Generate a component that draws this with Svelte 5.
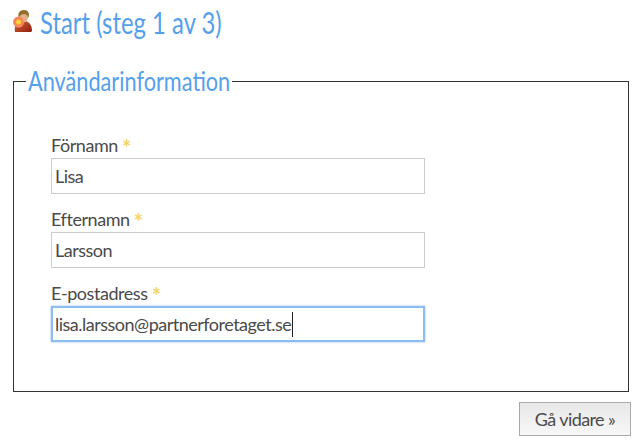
<script>
	let fields = [
		{ label: 'Förnamn', value: 'Lisa' },
		{ label: 'Efternamn', value: 'Larsson' },
		{ label: 'E-postadress', value: 'lisa.larsson@partnerforetaget.se', focused: true }
	];
</script>

<main>
	<h1>
		<svg class="icon" viewBox="0 0 19 22" width="19" height="22" aria-hidden="true">
			<defs>
				<linearGradient id="body" x1="0" y1="0" x2="1" y2="1">
					<stop offset="0" stop-color="#d9622f" />
					<stop offset="1" stop-color="#8f1f12" />
				</linearGradient>
				<radialGradient id="glow">
					<stop offset="0.35" stop-color="#fcd33a" />
					<stop offset="0.55" stop-color="#f7873d" />
					<stop offset="1" stop-color="#f6897d" />
				</radialGradient>
			</defs>
			<path d="M2 22c-1-6 1-10 7-11h3c5 1 7 5 7 10l-1 1z" fill="url(#body)" />
			<ellipse cx="10.5" cy="6.5" rx="4.6" ry="6" fill="#e0b184" />
			<path d="M6 8C4 3 7 0 11 0s6 3 4.500 8c-.5-2-2-4-4.500-4S7 5 6 8z" fill="#8f6d2b" />
			<circle cx="5.500" cy="12" r="5.500" fill="url(#glow)" />
		</svg>
		<span class="title">Start (steg 1 av 3)</span>
	</h1>

	<form>
		<fieldset>
			<legend><span>Användarinformation</span></legend>
			{#each fields as field}
				<div class="field">
					<label for={field.label}>{field.label} <span class="req">*</span></label>
					<div class="control">
						<input id={field.label} type="text" value={field.value} class:focused={field.focused} />
						{#if field.focused}<span class="caret"></span>{/if}
					</div>
				</div>
			{/each}
		</fieldset>
		<div class="actions">
			<button type="button">Gå vidare »</button>
		</div>
	</form>
</main>

<style>
	:global(body) {
		background: #fff;
	}
	main {
		padding: 0 9px 0 13px;
		font-family: Lato, sans-serif;
		color: #4a4a4a;
	}
	h1 {
		display: flex;
		align-items: center;
		gap: 8px;
		height: 44px;
		margin: 0 0 29px;
		font-size: 31px;
		font-weight: 400;
		color: #55a0ec;
		white-space: nowrap;
	}
	.icon {
		flex: none;
		margin-bottom: 2px;
	}
	.title {
		display: inline-block;
		transform: scaleX(0.77);
		transform-origin: left center;
	}
	fieldset {
		box-sizing: border-box;
		height: 326px;
		margin: -7px 2px 0 0;
		padding: 36px 16px 0 37px;
		border: 1px solid #333;
	}
	legend {
		box-sizing: border-box;
		width: 206px;
		padding: 0 2px;
		margin-left: -25px;
		font-size: 26px;
		font-weight: 400;
		line-height: 30px;
		color: #55a0ec;
		white-space: nowrap;
	}
	legend span {
		display: inline-block;
		transform: scaleX(0.835);
		transform-origin: left center;
	}
	.field {
		margin-bottom: 12px;
	}
	label {
		display: block;
		height: 26px;
		line-height: 26px;
		font-size: 18px;
		letter-spacing: -0.45px;
	}
	.req {
		font-size: 22px;
		line-height: 20px;
		font-weight: 700;
		vertical-align: -4px;
		color: #f5d45f;
	}
	.control {
		position: relative;
		width: 374px;
	}
	input {
		box-sizing: border-box;
		display: block;
		width: 100%;
		height: 36px;
		padding: 0 3px;
		border: 1px solid #ccc;
		border-radius: 0;
		outline: none;
		font-family: inherit;
		font-size: 18px;
		letter-spacing: -0.5px;
		color: #4a4a4a;
	}
	input.focused {
		border: 2px solid #8bbcf2;
		padding: 0 2px;
		box-shadow: 0 0 2px #8bbcf2;
	}
	.caret {
		position: absolute;
		left: 241px;
		top: 6px;
		width: 1px;
		height: 25px;
		background: #222;
	}
	.actions {
		display: flex;
		justify-content: flex-end;
		margin-top: 10px;
	}
	button {
		width: 112px;
		height: 34px;
		border: 1px solid #aaa;
		background: linear-gradient(#e8e8e8, #f7f7f7);
		font-family: inherit;
		font-size: 18px;
		letter-spacing: -0.6px;
		color: #4a4a4a;
	}
</style>
